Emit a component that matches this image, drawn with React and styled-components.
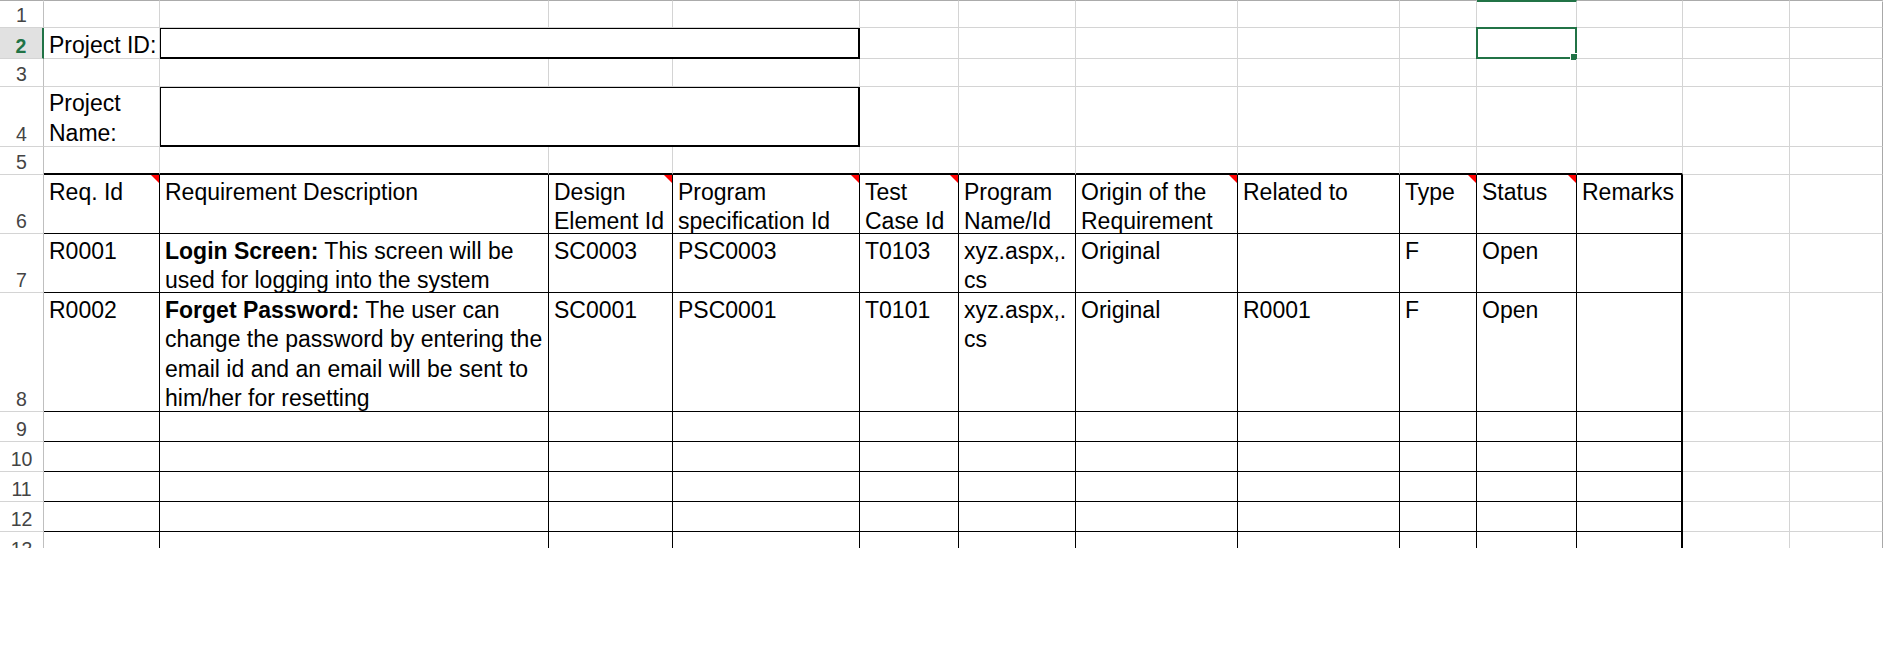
import React from "react";
import styled, { createGlobalStyle, css } from "styled-components";

const GRID = "#d4d4d4";
const INK = "#000";
const GREEN = "#217346";

// row header + columns A..M
const COLUMNS = [44, 116, 389, 124, 187, 99, 117, 162, 162, 77, 100, 106, 107, 93];
const ROW_HEIGHTS = [26, 31, 28, 60, 28, 59, 59, 119, 30, 30, 30, 30, 30];
const TABLE_COLS = 11; // A..K carry the black borders
const SELECTED_COL = 9; // J

const GlobalStyle = createGlobalStyle`
  html, body {
    margin: 0;
    padding: 0;
    background: #fff;
  }
  body {
    font-family: "Liberation Sans", Arial, sans-serif;
    color: #000;
  }
`;

const Sheet = styled.div`
  display: grid;
  grid-template-columns: ${COLUMNS.map((w) => `${w}px`).join(" ")};
  grid-template-rows: 2px ${ROW_HEIGHTS.map((h) => `${h}px`).join(" ")};
  width: 1885px;
  height: 548px;
  overflow: hidden;
  font-size: 23px;
  line-height: 29.3px;
`;

const HeaderEdge = styled.div`
  box-sizing: border-box;
  border-top: ${(p) => (p.$active ? `2px solid ${GREEN}` : "1px solid #ababab")};
  border-right: 1px solid ${GRID};
`;

const RowHead = styled.div`
  box-sizing: border-box;
  display: flex;
  align-items: flex-end;
  justify-content: center;
  padding-bottom: 2px;
  font-size: 19.5px;
  line-height: 1;
  color: ${(p) => (p.$active ? GREEN : "#444")};
  font-weight: ${(p) => (p.$active ? 700 : 400)};
  background: ${(p) => (p.$active ? "#e1e1e1" : "#fff")};
  border-bottom: 1px solid ${GRID};
  border-right: ${(p) => (p.$active ? `2px solid ${GREEN}` : "1px solid #bfbfbf")};
`;

const Cell = styled.div`
  position: relative;
  box-sizing: border-box;
  min-width: 0;
  display: flex;
  flex-direction: column;
  justify-content: ${(p) => (p.$bottom ? "flex-end" : "flex-start")};
  padding: ${(p) => (p.$bottom ? "0 4px 0 5px" : "3px 4px 0 5px")};
  border-right: ${(p) => p.$right};
  border-bottom: ${(p) => p.$under};
  white-space: nowrap;

  ${(p) =>
    p.$note &&
    css`
      &::after {
        content: "";
        position: absolute;
        top: 0;
        right: 0;
        border-top: 8px solid #f00;
        border-left: 8px solid transparent;
      }
    `}
`;

const Lines = styled.div`
  margin-bottom: ${(p) => (p.$drop ? "-2px" : "0")};
`;

const Line = styled.span`
  display: block;
`;

const InputBox = styled.div`
  grid-column: span 3;
  box-sizing: border-box;
  margin: -1px 0 0 -1px;
  border: 2px solid ${INK};
`;

const Selected = styled.div`
  position: relative;
  box-sizing: border-box;
  margin: -1px 0 0 -1px;
  border: 2px solid ${GREEN};

  &::after {
    content: "";
    position: absolute;
    right: -3px;
    bottom: -4px;
    width: 6px;
    height: 6px;
    background: ${GREEN};
    border: 1px solid #fff;
  }
`;

const HEADINGS = [
  { lines: ["Req. Id"], note: true },
  { lines: ["Requirement Description"] },
  { lines: ["Design", "Element Id"], note: true },
  { lines: ["Program", "specification Id"], note: true },
  { lines: ["Test", "Case Id"], note: true },
  { lines: ["Program", "Name/Id"] },
  { lines: ["Origin of the", "Requirement"], note: true },
  { lines: ["Related to"] },
  { lines: ["Type"], note: true },
  { lines: ["Status"], note: true },
  { lines: ["Remarks"] },
];

const RECORDS = [
  [
    ["R0001"],
    [
      <>
        <b>Login Screen:</b> This screen will be
      </>,
      "used for logging into the system",
    ],
    ["SC0003"],
    ["PSC0003"],
    ["T0103"],
    ["xyz.aspx,.", "cs"],
    ["Original"],
    [],
    ["F"],
    ["Open"],
    [],
  ],
  [
    ["R0002"],
    [
      <>
        <b>Forget Password:</b> The user can
      </>,
      "change the password by entering the",
      "email id and an email will be sent to",
      "him/her for resetting",
    ],
    ["SC0001"],
    ["PSC0001"],
    ["T0101"],
    ["xyz.aspx,.", "cs"],
    ["Original"],
    ["R0001"],
    ["F"],
    ["Open"],
    [],
  ],
];

const gridEdge = (col) => (col === 12 ? "1px solid #a8a8a8" : `1px solid ${GRID}`);
const inkEdge = (w) => `${w}px solid ${INK}`;

const renderLines = (lines, drop) =>
  lines.length > 0 && (
    <Lines $drop={drop}>
      {lines.map((l, i) => (
        <Line key={i}>{l}</Line>
      ))}
    </Lines>
  );

// plain cells of the top area (rows 1-5), columns from..12
const plainCells = (row, from) =>
  Array.from({ length: 13 - from }, (_, k) => {
    const col = from + k;
    if (row === 2 && col === SELECTED_COL) return <Selected key={`${row}-${col}`} />;
    const under = row === 5 && col < TABLE_COLS ? inkEdge(2) : `1px solid ${GRID}`;
    return <Cell key={`${row}-${col}`} $bottom $right={gridEdge(col)} $under={under} />;
  });

const tableRow = (row, contents, notes) => [
  <RowHead key={`h${row}`}>{row}</RowHead>,
  ...Array.from({ length: 13 }, (_, col) => {
    if (col >= TABLE_COLS) {
      return <Cell key={`${row}-${col}`} $right={gridEdge(col)} $under={`1px solid ${GRID}`} />;
    }
    return (
      <Cell
        key={`${row}-${col}`}
        $note={notes && notes[col]}
        $right={inkEdge(col === TABLE_COLS - 1 ? 2 : 1)}
        $under={inkEdge(1)}
      >
        {contents && renderLines(contents[col] || [], false)}
      </Cell>
    );
  }),
];

const App = () => {
  return (
    <>
      <GlobalStyle />
      <Sheet>
        {COLUMNS.map((_, i) => (
          <HeaderEdge key={`e${i}`} $active={i - 1 === SELECTED_COL} />
        ))}

        <RowHead>1</RowHead>
        {plainCells(1, 0)}

        <RowHead $active>2</RowHead>
        <Cell $bottom $right={gridEdge(0)} $under={`1px solid ${GRID}`}>
          {renderLines(["Project ID:"], true)}
        </Cell>
        <InputBox />
        {plainCells(2, 4)}

        <RowHead>3</RowHead>
        {plainCells(3, 0)}

        <RowHead>4</RowHead>
        <Cell $bottom $right={gridEdge(0)} $under={`1px solid ${GRID}`}>
          {renderLines(["Project", "Name:"], true)}
        </Cell>
        <InputBox />
        {plainCells(4, 4)}

        <RowHead>5</RowHead>
        {plainCells(5, 0)}

        {tableRow(
          6,
          HEADINGS.map((h) => h.lines),
          HEADINGS.map((h) => h.note)
        )}
        {RECORDS.map((rec, i) => tableRow(7 + i, rec))}
        {[9, 10, 11, 12, 13].map((r) => tableRow(r))}
      </Sheet>
    </>
  );
};

export default App;
